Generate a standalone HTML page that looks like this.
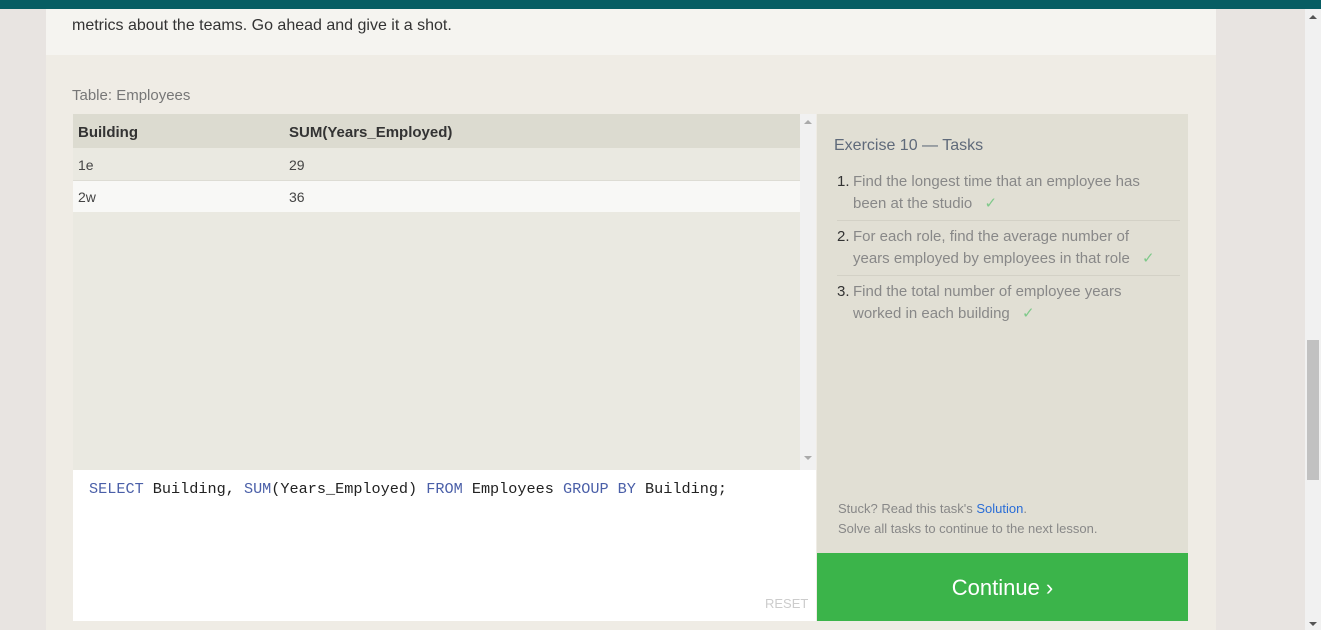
<!DOCTYPE html>
<html><head><meta charset="utf-8"><style>
*{margin:0;padding:0;box-sizing:border-box}
body{width:1321px;height:630px;overflow:hidden;background:#e8e4e1;font-family:"Liberation Sans",sans-serif;position:relative}
.abs{position:absolute}
.it{position:relative;padding-left:16px;padding-right:22px}
.n{position:absolute;left:0;color:#333}
</style></head><body>
<div class="abs" style="left:0;top:0;width:1321px;height:9px;background:#075d63"></div>
<div class="abs" style="left:46px;top:9px;width:1170px;height:46px;background:#f5f4f0"></div>
<div class="abs" style="left:72px;top:17px;font-size:16px;color:#333">metrics about the teams. Go ahead and give it a shot.</div>
<div class="abs" style="left:46px;top:55px;width:1170px;height:575px;background:#efece5"></div>
<div class="abs" style="left:72px;top:87px;font-size:15px;color:#777">Table: Employees</div>
<div class="abs" style="left:73px;top:114px;width:727px;height:356px;background:#eae9e1"></div>
<div class="abs" style="left:73px;top:114px;width:727px;height:34px;background:#dcdbd0"></div>
<div class="abs" style="left:73px;top:180px;width:727px;height:32px;background:#f8f8f6;border-top:1px solid #dddcd4"></div>
<div class="abs" style="left:78px;top:124px;font-size:15px;font-weight:bold;color:#333">Building</div>
<div class="abs" style="left:289px;top:124px;font-size:15px;font-weight:bold;color:#333">SUM(Years_Employed)</div>
<div class="abs" style="left:78px;top:157px;font-size:14px;color:#444">1e</div>
<div class="abs" style="left:289px;top:157px;font-size:14px;color:#444">29</div>
<div class="abs" style="left:78px;top:189px;font-size:14px;color:#444">2w</div>
<div class="abs" style="left:289px;top:189px;font-size:14px;color:#444">36</div>
<div class="abs" style="left:800px;top:114px;width:16px;height:356px;background:#f1f1f1"></div>
<div class="abs" style="left:804px;top:120px;width:0;height:0;border:4px solid transparent;border-bottom-color:#aaa;border-top:0"></div>
<div class="abs" style="left:804px;top:456px;width:0;height:0;border:4px solid transparent;border-top-color:#aaa;border-bottom:0"></div>
<div class="abs" style="left:73px;top:470px;width:743px;height:151px;background:#fff"></div>
<div class="abs" style="left:89px;top:480px;font-family:'Liberation Mono',monospace;font-size:15.2px;color:#222;white-space:pre"><span style="color:#4a5fa8">SELECT</span> Building, <span style="color:#4a5fa8">SUM</span>(Years_Employed) <span style="color:#4a5fa8">FROM</span> Employees <span style="color:#4a5fa8">GROUP BY</span> Building;</div>
<div class="abs" style="left:765px;top:596px;font-size:13px;color:#ccc">RESET</div>
<div class="abs" style="left:817px;top:114px;width:371px;height:439px;background:#e1dfd4"></div>
<div class="abs" style="left:834px;top:137px;font-size:16px;color:#5f6a7a">Exercise 10 — Tasks</div>
<div class="abs" style="left:837px;top:171px;width:343px;font-size:15px;color:#888;line-height:22px">
<div class="it" style="padding-bottom:5px;border-bottom:1px solid #d3d1c6"><span class="n">1.</span>Find the longest time that an employee has been at the studio <span style="color:#7fc98a;margin-left:8px">✓</span></div>
<div class="it" style="padding-top:5px;padding-bottom:5px;border-bottom:1px solid #d3d1c6"><span class="n" style="top:5px">2.</span>For each role, find the average number of years employed by employees in that role <span style="color:#7fc98a;margin-left:8px">✓</span></div>
<div class="it" style="padding-top:5px"><span class="n" style="top:5px">3.</span>Find the total number of employee years worked in each building <span style="color:#7fc98a;margin-left:8px">✓</span></div>
</div>
<div class="abs" style="left:838px;top:499px;font-size:13px;color:#888;line-height:20px">Stuck? Read this task's <span style="color:#2a6dd6">Solution</span>.<br>Solve all tasks to continue to the next lesson.</div>
<div class="abs" style="left:817px;top:553px;width:371px;height:68px;background:#3bb44a;color:#fff;font-size:22px;text-align:center;line-height:70px">Continue ›</div>
<div class="abs" style="left:1305px;top:9px;width:16px;height:621px;background:#f1f1f1"></div>
<div class="abs" style="left:1307px;top:340px;width:12px;height:140px;background:#c1c1c1"></div>
<div class="abs" style="left:1309px;top:15px;border:4px solid transparent;border-bottom-color:#555;border-top:0"></div>
<div class="abs" style="left:1309px;top:622px;border:4px solid transparent;border-top-color:#555;border-bottom:0"></div>
</body></html>
